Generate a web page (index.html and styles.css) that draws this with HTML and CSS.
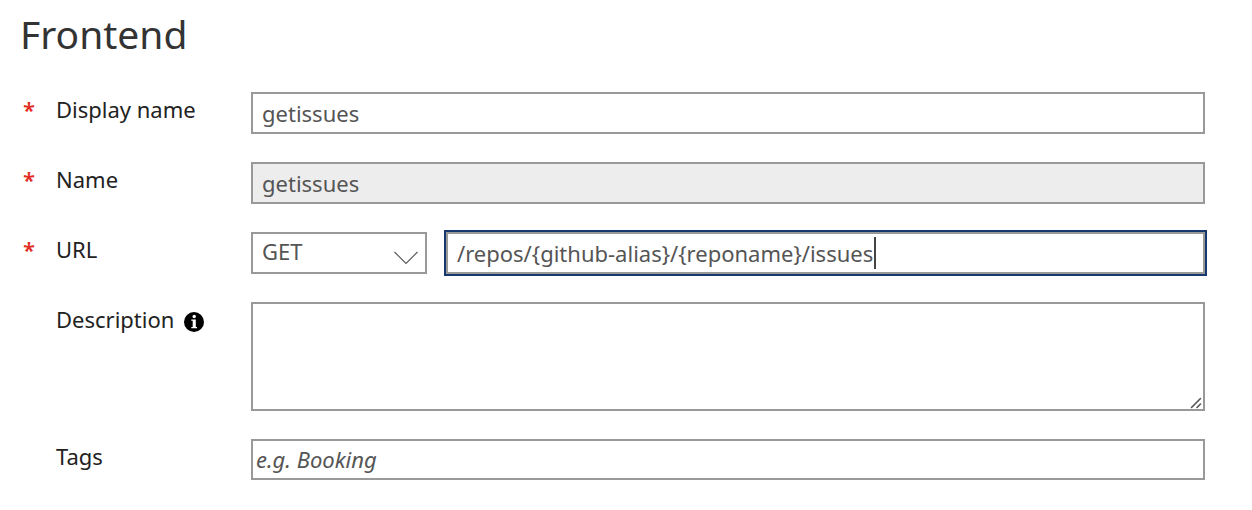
FILE: index.html
```
<!DOCTYPE html>
<html lang="en">
<head>
<meta charset="utf-8">
<title>Frontend</title>
<link rel="stylesheet" href="styles.css">
</head>
<body>
<form class="frontend">
  <h1 class="title">Frontend</h1>
  <div class="row">
    <span class="required">*</span>
    <label class="label" for="display-name">Display name</label>
    <input class="field" id="display-name" type="text" value="getissues" required>
  </div>
  <div class="row">
    <span class="required">*</span>
    <label class="label" for="name">Name</label>
    <input class="field field-readonly" id="name" type="text" value="getissues" readonly>
  </div>
  <div class="row">
    <span class="required">*</span>
    <label class="label" for="url">URL</label>
    <div class="url">
      <div class="method">
        <select class="field method-select" aria-label="Method">
          <option>GET</option>
        </select>
        <svg class="chevron" viewBox="0 0 24 14" aria-hidden="true"><path d="M0.500 1L12 12.500L23.500 1" fill="none" stroke="#555" stroke-width="1.100"/></svg>
      </div>
      <div class="path">
        <input class="field field-active" id="url" type="text" value="/repos/{github-alias}/{reponame}/issues" required>
        <span class="caret"></span>
      </div>
    </div>
  </div>
  <div class="row">
    <span></span>
    <div class="label">
      <label for="description">Description</label>
      <svg class="info" viewBox="0 0 20 20" role="img" aria-label="Information"><circle cx="10" cy="10" r="10"/><circle cx="10.200" cy="4.500" r="1.700" fill="#fff"/><path d="M7.300 7.500H11.800V15H13V16.200H7.300V15H8.700V8.700H7.300Z" fill="#fff"/></svg>
    </div>
    <div class="area">
      <textarea class="field description" id="description"></textarea>
      <svg class="grip" viewBox="0 0 12 12" aria-hidden="true"><path d="M1.500 10.500L10.500 1.500M7 10.500L10.500 7" stroke="#555" stroke-width="1.600" stroke-linecap="round"/></svg>
    </div>
  </div>
  <div class="row">
    <span></span>
    <label class="label" for="tags">Tags</label>
    <input class="field tags" id="tags" type="text" placeholder="e.g. Booking">
  </div>
</form>
</body>
</html>
```
FILE: styles.css
```
* { box-sizing: border-box; }

body {
  margin: 0;
  background: #fff;
  color: #222;
  font: 22px/34px "Noto Sans", "Open Sans", sans-serif;
}

.frontend {
  display: flex;
  flex-direction: column;
  gap: 28px;
  padding: 6px 47px 28px 20px;
}

.title {
  margin: 0 0 2px;
  color: #333;
  font-size: 39px;
  font-weight: 400;
  line-height: 56px;
}

.row {
  display: grid;
  grid-template-columns: 36px 195px minmax(0, 1fr);
  align-items: start;
}

.required {
  padding-left: 3px;
  color: #e32d22;
  font-weight: 600;
}

.label {
  display: flex;
  align-items: center;
  gap: 10px;
}

.info {
  width: 20px;
  height: 20px;
  margin-top: 6px;
}

.field {
  display: block;
  width: 100%;
  height: 42px;
  margin: 0;
  padding: 1px 9px 2px;
  border: 2px solid #999;
  border-radius: 0;
  background: #fff;
  color: #555;
  font: inherit;
  outline: none;
}

.field-readonly { background: #ededed; }

.url {
  display: grid;
  grid-template-columns: 176px minmax(0, 1fr);
  gap: 19px;
}

.method,
.path,
.area { position: relative; }

.method-select {
  padding-top: 0;
  padding-bottom: 4px;
  appearance: none;
}

.chevron {
  position: absolute;
  right: 9px;
  bottom: 9px;
  width: 24px;
  height: 14px;
  pointer-events: none;
}

.field-active {
  outline: 2px solid #17376f;
  caret-color: transparent;
}

.caret {
  position: absolute;
  top: 5px;
  left: 428px;
  width: 2px;
  height: 32px;
  background: #444;
}

.description {
  height: 109px;
  resize: none;
}

.grip {
  position: absolute;
  right: 3px;
  bottom: 2px;
  width: 12px;
  height: 12px;
  pointer-events: none;
}

.tags {
  height: 41px;
  padding-left: 3px;
}

.tags::placeholder {
  color: #555;
  font-style: italic;
  opacity: 1;
}
```
